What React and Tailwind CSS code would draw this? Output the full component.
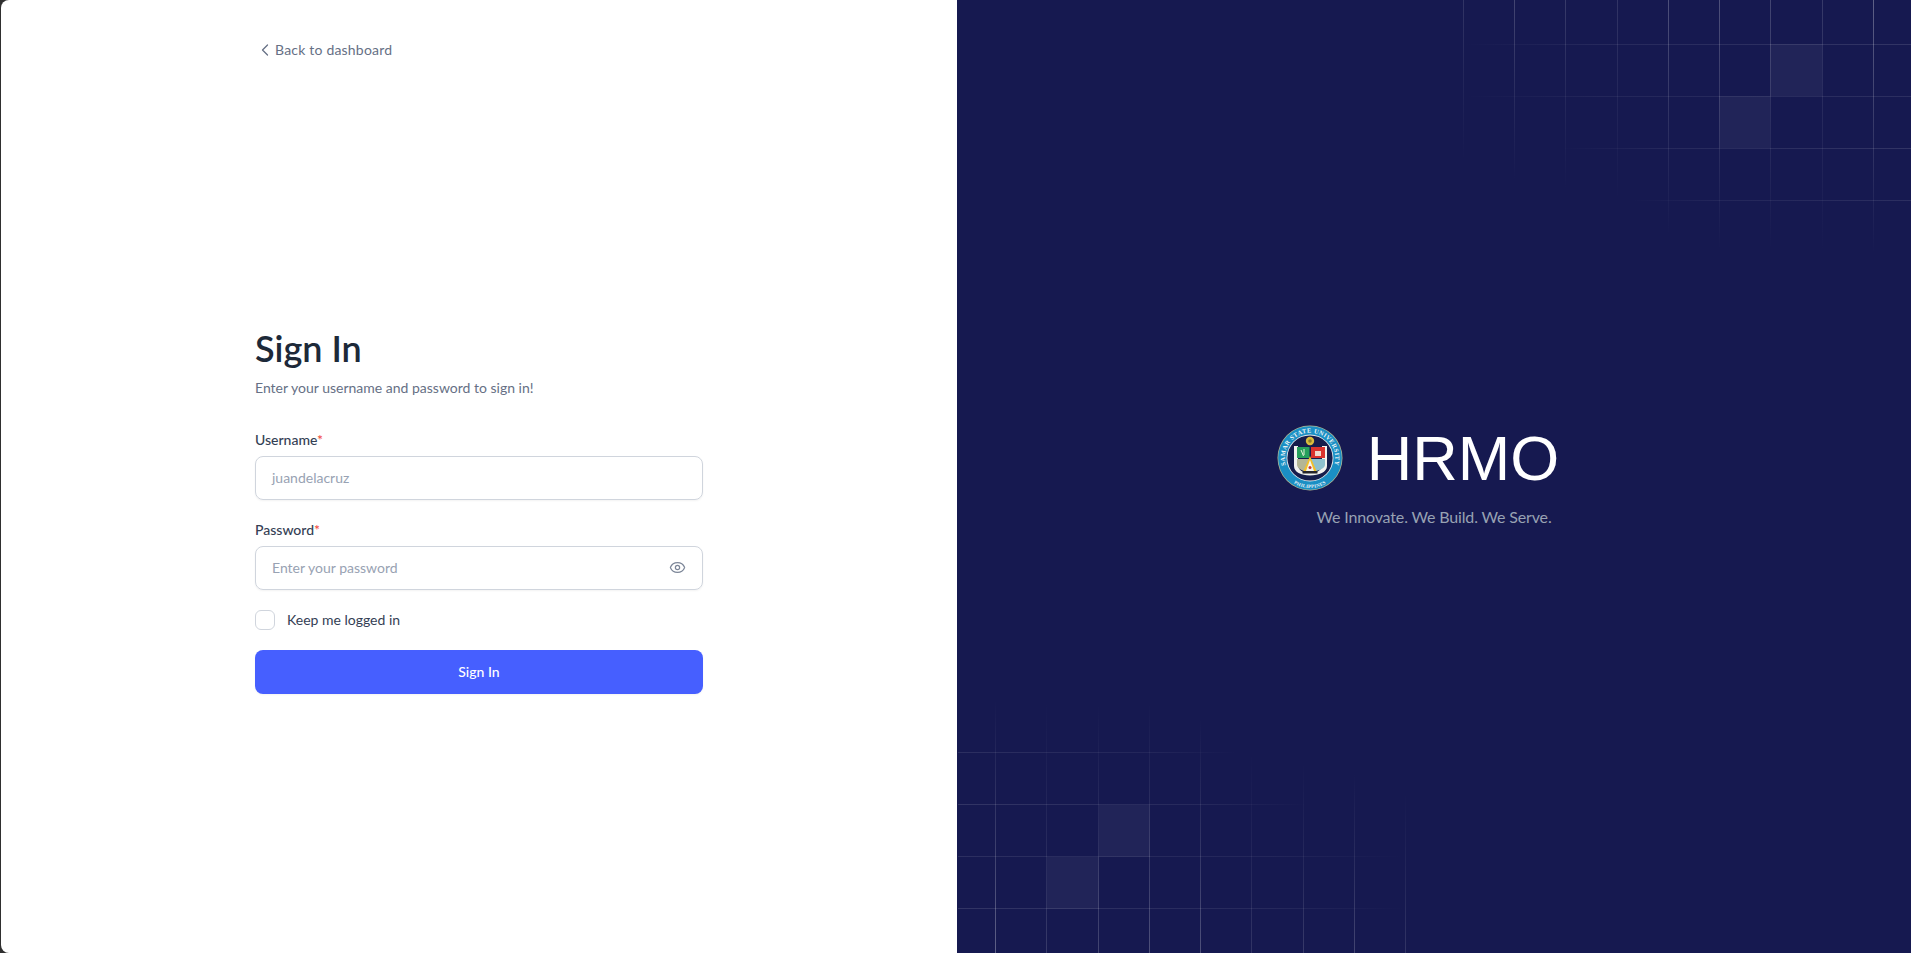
import React from "react";
import { ChevronLeft, Eye } from "lucide-react";

// decorative grid, same drawing is flipped for the bottom-left corner
const vLines = [
  [2.5, 160, 0.1],
  [53.5, 180, 0.16],
  [104.5, 190, 0.12],
  [156, 200, 0.1],
  [207, 235, 0.2],
  [258, 250, 0.2],
  [309, 250, 0.16],
  [361, 253, 0.12],
  [412, 253, 0.26],
];

const hLines = [
  [44, 2, 0.1],
  [96, 2, 0.08],
  [148, 100, 0.1],
  [200, 170, 0.08],
];

function GridShape({ id, className }) {
  return (
    <svg viewBox="0 0 450 254" width="450" height="254" fill="none" className={className}>
      <defs>
        {vLines.map(([x, end, op], i) => (
          <linearGradient key={i} id={`${id}-v${i}`} gradientUnits="userSpaceOnUse" x1="0" y1="0" x2="0" y2={end}>
            <stop offset="0" stopColor="#fff" stopOpacity={op * 1.2} />
            <stop offset="0.45" stopColor="#fff" stopOpacity={op * 0.6} />
            <stop offset="1" stopColor="#fff" stopOpacity="0" />
          </linearGradient>
        ))}
        {hLines.map(([y, start, op], i) => (
          <linearGradient key={i} id={`${id}-h${i}`} gradientUnits="userSpaceOnUse" x1="450" y1="0" x2={start} y2="0">
            <stop offset="0" stopColor="#fff" stopOpacity={op * 1.2} />
            <stop offset="0.7" stopColor="#fff" stopOpacity={op * 0.7} />
            <stop offset="1" stopColor="#fff" stopOpacity="0" />
          </linearGradient>
        ))}
      </defs>
      <rect x="309" y="44" width="52" height="52" fill="#fff" fillOpacity="0.05" />
      <rect x="258" y="96" width="51" height="52" fill="#fff" fillOpacity="0.05" />
      {vLines.map(([x, end], i) => (
        <rect key={i} x={Math.floor(x)} y="0" width="1" height={end} fill={`url(#${id}-v${i})`} />
      ))}
      {hLines.map(([y, start], i) => (
        <rect key={i} x={start} y={y} width={450 - start} height="1" fill={`url(#${id}-h${i})`} />
      ))}
    </svg>
  );
}

function Seal() {
  return (
    <svg viewBox="0 0 66 66" width="66" height="66" className="shrink-0">
      <defs>
        <path id="seal-top" d="M 11.2 45.6 A 25.2 25.2 0 1 1 54.8 45.6" />
        <path id="seal-bottom" d="M 9 51 A 30 30 0 0 0 57 51" />
      </defs>
      <circle cx="33" cy="33" r="32.5" fill="#b9b98f" />
      <circle cx="33" cy="33" r="31.8" fill="#1b8fc4" />
      <circle cx="33" cy="33" r="23.5" fill="#dfe8ec" />
      <circle cx="33" cy="33" r="22.6" fill="#161d4c" />
      <text fill="#eef6f9" fontSize="6.3" fontWeight="700" fontFamily="'Liberation Serif', serif" letterSpacing="0.35">
        <textPath href="#seal-top" startOffset="50%" textAnchor="middle">SAMAR STATE UNIVERSITY</textPath>
      </text>
      <text fill="#eef6f9" fontSize="4.8" fontWeight="700" fontFamily="'Liberation Serif', serif" letterSpacing="0.3">
        <textPath href="#seal-bottom" startOffset="50%" textAnchor="middle">PHILIPPINES</textPath>
      </text>
      <circle cx="33" cy="16" r="4.2" fill="#d9bb3c" />
      <circle cx="33" cy="16" r="1.8" fill="#8f7f2a" />
      {/* shield */}
      <path d="M17 21 H21 V40 C21 45 26 48 33 48 C40 48 45 45 45 40 V21 H50 V41 C50 47 42 50.5 33 50.5 C24 50.5 17 47 17 41 Z" fill="#f2f3f0" />
      <rect x="20" y="22" width="12.5" height="11" fill="#27a05c" />
      <rect x="34" y="22" width="14" height="11" fill="#d9322e" />
      <path d="M24 25 L26.5 31 M27 24 V30" stroke="#e8f2d8" strokeWidth="1" />
      <path d="M38 26 H44 V31 H38 Z" fill="#eed9cf" />
      <path d="M20 34 H32 V47 C26 46.5 20.5 44 20 40 Z" fill="#b4b695" />
      <path d="M34 34 H48 V40 C47.5 44 40 46.5 34 47 Z" fill="#8fc1cf" />
      <path d="M33 31 L39.5 46 H26.5 Z" fill="#f2c02c" />
      <path d="M33 35 L37 46 H29 Z" fill="#f6f6ef" />
      <circle cx="33" cy="42.5" r="1.5" fill="#c8392f" />
      <rect x="25.5" y="46" width="15" height="2.6" rx="0.5" fill="#25252b" />
    </svg>
  );
}

export default function App() {
  return (
    <div className="h-[953px] w-full overflow-hidden bg-[#2f2f2f] pl-px font-['Lato',sans-serif]">
      <div className="flex h-full overflow-hidden rounded-l-[8px] bg-white">
        <div className="flex w-[956px] shrink-0 flex-col">
          <div className="mx-auto w-full max-w-[448px] pt-10">
            <a className="inline-flex items-center text-sm tracking-[0.2px] text-[#667085]">
              <ChevronLeft size={20} strokeWidth={1.5} />
              Back to dashboard
            </a>
          </div>
          <div className="mx-auto flex w-full max-w-[448px] flex-1 flex-col justify-center">
            <h1 className="mb-2 text-4xl leading-[44px] font-semibold text-[#1d2939]">Sign In</h1>
            <p className="text-sm text-[#667085]">Enter your username and password to sign in!</p>
            <form className="mt-8 flex flex-col">
              <label className="mb-1.5 block text-sm font-medium text-[#344054]">
                Username<span className="text-[#f04438]">*</span>
              </label>
              <div className="flex h-11 items-center rounded-lg border border-[#d0d5dd] px-4 text-sm text-[#98a2b3] shadow-xs">
                juandelacruz
              </div>
              <label className="mt-5 mb-1.5 block text-sm font-medium text-[#344054]">
                Password<span className="text-[#f04438]">*</span>
              </label>
              <div className="flex h-11 items-center justify-between rounded-lg border border-[#d0d5dd] px-4 text-sm text-[#98a2b3] shadow-xs">
                Enter your password
                <Eye size={17} strokeWidth={1.75} className="text-[#7c8698]" />
              </div>
              <div className="mt-5 flex items-center gap-3">
                <span className="h-5 w-5 rounded-md border border-[#d0d5dd]" />
                <span className="text-sm text-[#344054]">Keep me logged in</span>
              </div>
              <button type="button" className="mt-5 h-11 rounded-lg bg-[#465fff] text-sm font-medium text-white shadow-xs">
                Sign In
              </button>
            </form>
          </div>
        </div>
        <div className="relative flex flex-1 flex-col items-center justify-center bg-[#161950]">
          <GridShape id="grid-top" className="absolute top-0 right-0" />
          <GridShape id="grid-bottom" className="absolute bottom-0 left-px rotate-180" />
          <div className="flex flex-col items-center">
            <div className="mr-[32px] flex items-center gap-[24px]">
              <Seal />
              <span className="font-['Liberation_Sans',sans-serif] text-[63px] leading-[66px] text-white">HRMO</span>
            </div>
            <p className="mt-[14px] text-base tracking-[-0.15px] text-[#98a2b3]">We Innovate. We Build. We Serve.</p>
          </div>
        </div>
      </div>
    </div>
  );
}
